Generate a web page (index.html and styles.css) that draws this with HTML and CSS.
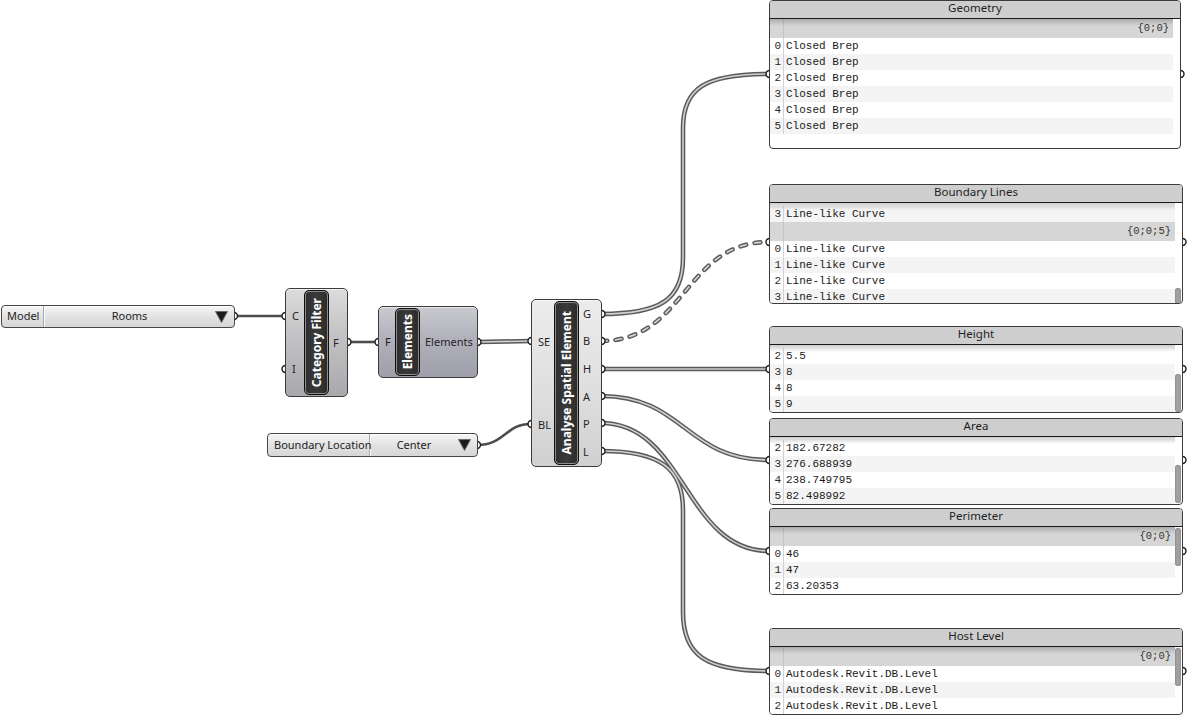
FILE: index.html
```html
<!DOCTYPE html>
<html>
<head>
<meta charset="utf-8">
<link rel="stylesheet" href="styles.css">
</head>
<body>
<div class="canvas">
  <svg class="wires" width="1189" height="715" viewBox="0 0 1189 715">
    <g class="single">
      <path d="M234 316 L285 316"/>
      <path d="M348 342 L378 342"/>
      <path d="M477 445 C505 445 505 424 531 424"/>
    </g>
    <g class="dbl-outer">
      <path d="M478 342 L531 341"/>
      <path d="M601 314 C660 314 683 300 683 258 L683 128 C683 88 705 74 769 74"/>
      <path d="M601 369 L769 369"/>
      <path d="M601 396 C685 396 685 460 769 460"/>
      <path d="M601 423 C685 423 685 551 769 551"/>
      <path d="M601 451 C660 451 683 468 683 510 L683 612 C683 655 705 671 769 671"/>
    </g>
    <g class="dbl-inner">
      <path d="M478 342 L531 341"/>
      <path d="M601 314 C660 314 683 300 683 258 L683 128 C683 88 705 74 769 74"/>
      <path d="M601 369 L769 369"/>
      <path d="M601 396 C685 396 685 460 769 460"/>
      <path d="M601 423 C685 423 685 551 769 551"/>
      <path d="M601 451 C660 451 683 468 683 510 L683 612 C683 655 705 671 769 671"/>
    </g>
    <path class="dash-outer" d="M601 341 C686 341 684 242 769 242"/>
    <path class="dash-inner" d="M601 341 C686 341 684 242 769 242"/>
    <g class="grips">
      <circle cx="234" cy="316" r="3.5"/>
      <circle cx="285.5" cy="316" r="3.5"/>
      <circle cx="285.5" cy="369" r="3.5"/>
      <circle cx="347.5" cy="342" r="3.5"/>
      <circle cx="378.5" cy="342" r="3.5"/>
      <circle cx="477.5" cy="342" r="3.5"/>
      <circle cx="477" cy="445" r="3.5"/>
      <circle cx="531.5" cy="341" r="3.5"/>
      <circle cx="531.5" cy="424" r="3.5"/>
      <circle cx="601.5" cy="314" r="3.5"/>
      <circle cx="601.5" cy="341" r="3.5"/>
      <circle cx="601.5" cy="369" r="3.5"/>
      <circle cx="601.5" cy="396" r="3.5"/>
      <circle cx="601.5" cy="423" r="3.5"/>
      <circle cx="601.5" cy="451" r="3.5"/>
      <circle cx="769.5" cy="74" r="3.5"/>
      <circle cx="1180.5" cy="74" r="3.5"/>
      <circle cx="769.5" cy="242" r="3.5"/>
      <circle cx="1182.5" cy="242" r="3.5"/>
      <circle cx="769.5" cy="369" r="3.5"/>
      <circle cx="1182.5" cy="369" r="3.5"/>
      <circle cx="769.5" cy="460" r="3.5"/>
      <circle cx="1182.5" cy="460" r="3.5"/>
      <circle cx="769.5" cy="551" r="3.5"/>
      <circle cx="1182.5" cy="551" r="3.5"/>
      <circle cx="769.5" cy="671" r="3.5"/>
      <circle cx="1182.5" cy="671" r="3.5"/>
    </g>
  </svg>

  <!-- Value list: Model -->
  <div class="vlist vl-model">
    <div class="vl-name">Model</div>
    <div class="vl-val">Rooms</div>
    <div class="vl-arrow"><svg width="13" height="12" viewBox="0 0 13 12"><polygon points="0.5,0.5 12.5,0.5 6.5,11.5"/></svg></div>
  </div>

  <!-- Value list: Boundary Location -->
  <div class="vlist vl-bound">
    <div class="vl-name">Boundary Location</div>
    <div class="vl-val">Center</div>
    <div class="vl-arrow"><svg width="13" height="12" viewBox="0 0 13 12"><polygon points="0.5,0.5 12.5,0.5 6.5,11.5"/></svg></div>
  </div>

  <!-- Category Filter -->
  <div class="comp c-cat">
    <div class="ins"><span>C</span><span>I</span></div>
    <div class="cap"><span>Category Filter</span></div>
    <div class="outs"><span>F</span></div>
  </div>

  <!-- Elements -->
  <div class="comp c-elem">
    <div class="ins"><span>F</span></div>
    <div class="cap"><span>Elements</span></div>
    <div class="outs"><span>Elements</span></div>
  </div>

  <!-- Analyse Spatial Element -->
  <div class="comp c-ana">
    <div class="ins"><span>SE</span><span>BL</span></div>
    <div class="cap"><span>Analyse Spatial Element</span></div>
    <div class="outs"><span>G</span><span>B</span><span>H</span><span>A</span><span>P</span><span>L</span></div>
  </div>

  <!-- Panels -->
  <div class="panel p-geom">
    <div class="ptitle">Geometry</div>
    <div class="pbody">
      <div class="phead"><span class="idx"></span><span class="path">{0;0}</span></div>
      <div class="row"><span class="idx">0</span><span class="val">Closed Brep</span></div>
      <div class="row alt"><span class="idx">1</span><span class="val">Closed Brep</span></div>
      <div class="row"><span class="idx">2</span><span class="val">Closed Brep</span></div>
      <div class="row alt"><span class="idx">3</span><span class="val">Closed Brep</span></div>
      <div class="row"><span class="idx">4</span><span class="val">Closed Brep</span></div>
      <div class="row alt"><span class="idx">5</span><span class="val">Closed Brep</span></div>
    </div>
  </div>

  <div class="panel p-bound">
    <div class="ptitle">Boundary Lines</div>
    <div class="pbody padded">
      <div class="row alt"><span class="idx">3</span><span class="val">Line-like Curve</span></div>
      <div class="phead"><span class="idx"></span><span class="path">{0;0;5}</span></div>
      <div class="row"><span class="idx">0</span><span class="val">Line-like Curve</span></div>
      <div class="row alt"><span class="idx">1</span><span class="val">Line-like Curve</span></div>
      <div class="row"><span class="idx">2</span><span class="val">Line-like Curve</span></div>
      <div class="row alt"><span class="idx">3</span><span class="val">Line-like Curve</span></div>
    </div>
    <div class="thumb"></div>
  </div>

  <div class="panel p-height">
    <div class="ptitle">Height</div>
    <div class="pbody padded">
      <div class="row"><span class="idx">2</span><span class="val">5.5</span></div>
      <div class="row alt"><span class="idx">3</span><span class="val">8</span></div>
      <div class="row"><span class="idx">4</span><span class="val">8</span></div>
      <div class="row alt"><span class="idx">5</span><span class="val">9</span></div>
    </div>
    <div class="thumb"></div>
  </div>

  <div class="panel p-area">
    <div class="ptitle">Area</div>
    <div class="pbody padded">
      <div class="row"><span class="idx">2</span><span class="val">182.67282</span></div>
      <div class="row alt"><span class="idx">3</span><span class="val">276.688939</span></div>
      <div class="row"><span class="idx">4</span><span class="val">238.749795</span></div>
      <div class="row alt"><span class="idx">5</span><span class="val">82.498992</span></div>
    </div>
    <div class="thumb"></div>
  </div>

  <div class="panel p-perim">
    <div class="ptitle">Perimeter</div>
    <div class="pbody">
      <div class="phead"><span class="idx"></span><span class="path">{0;0}</span></div>
      <div class="row"><span class="idx">0</span><span class="val">46</span></div>
      <div class="row alt"><span class="idx">1</span><span class="val">47</span></div>
      <div class="row"><span class="idx">2</span><span class="val">63.20353</span></div>
    </div>
    <div class="thumb"></div>
  </div>

  <div class="panel p-host">
    <div class="ptitle">Host Level</div>
    <div class="pbody">
      <div class="phead"><span class="idx"></span><span class="path">{0;0}</span></div>
      <div class="row"><span class="idx">0</span><span class="val">Autodesk.Revit.DB.Level</span></div>
      <div class="row alt"><span class="idx">1</span><span class="val">Autodesk.Revit.DB.Level</span></div>
      <div class="row"><span class="idx">2</span><span class="val">Autodesk.Revit.DB.Level</span></div>
    </div>
    <div class="thumb"></div>
  </div>
</div>
</body>
</html>
```

FILE: styles.css
```css
* { box-sizing: border-box; }
html, body { margin: 0; padding: 0; background: #fff; }
body { font-family: "Noto Sans", "Open Sans", sans-serif; font-size: 11px; color: #1e1e1e; }

.canvas { position: relative; width: 1189px; height: 715px; overflow: hidden; background: #fff; }

/* wires */
.wires { position: absolute; left: 0; top: 0; }
.wires path { fill: none; }
.single path { stroke: #4d4d4d; stroke-width: 2.6; }
.dbl-outer path { stroke: #5a5a5a; stroke-width: 4.6; }
.dbl-inner path { stroke: #cfcfcf; stroke-width: 1.6; }
.dash-outer { stroke: #5e5e5e; stroke-width: 4.6; stroke-dasharray: 6 8.5; stroke-linecap: round; fill: none; }
.dash-inner { stroke: #d4d4d4; stroke-width: 1.6; stroke-dasharray: 6 8.5; stroke-linecap: round; fill: none; }
.grips circle { fill: #fff; stroke: #1a1a1a; stroke-width: 1.4; }

/* value lists */
.vlist {
  position: absolute; display: flex; align-items: stretch;
  border: 1px solid #474747; border-radius: 4px;
  background: linear-gradient(#f6f6f6, #e4e4e4 45%, #d6d6d6);
  box-shadow: inset 0 1px 0 #fff;
}
.vl-model { left: 1px; top: 305px; width: 234px; height: 23px; }
.vl-bound { left: 267px; top: 433px; width: 211px; height: 24px; }
.vl-name {
  display: flex; align-items: center; padding: 0 5px 2px;
  border-right: 1px solid #a9a9a9; box-shadow: 1px 0 0 #fafafa;
  white-space: nowrap;
}
.vl-model .vl-name { width: 42px; }
.vl-bound .vl-name { width: 102px; padding-left: 6px; }
.vl-val { flex: 1; display: flex; align-items: center; justify-content: center; white-space: nowrap; padding-bottom: 2px; }
.vl-arrow { width: 19px; display: flex; align-items: center; justify-content: flex-start; }
.vl-arrow polygon { fill: #1c1c1c; stroke: #6a6a6a; stroke-width: 1; stroke-linejoin: round; }

/* components */
.comp {
  position: absolute; display: flex; align-items: stretch;
  border: 1px solid #3b3b3b; border-radius: 5px;
  box-shadow: inset 0 1px 0 rgba(255,255,255,0.6);
}
.c-cat { left: 285px; top: 288px; width: 63px; height: 109px; background: linear-gradient(#dcdcdc, #c4c4c6 40%, #a9a9ad); }
.c-elem { left: 378px; top: 306px; width: 100px; height: 72px; background: linear-gradient(#c9c9cf, #b1b1bb 45%, #9f9fab); }
.c-ana { left: 531px; top: 299px; width: 71px; height: 168px; background: linear-gradient(#ececec, #e0e0e0 50%, #d0d0d0); }

.ins, .outs { display: flex; flex-direction: column; justify-content: space-around; }
.ins span, .outs span { line-height: 14px; white-space: nowrap; }
.c-cat .ins { width: 18px; padding-left: 6px; }
.c-cat .outs { padding-left: 4px; }
.c-elem .ins { width: 16px; padding-left: 6px; }
.c-elem .outs { padding-left: 5px; padding-bottom: 1px; }
.c-ana .ins { width: 22px; padding-left: 6px; }
.c-ana .outs { padding-left: 4px; }
.outs span { color: #2a1f2a; }

.cap {
  width: 25px; margin: 1px 0;
  background: linear-gradient(90deg, #2e2e2e, #3a3a3a 50%, #2a2a2a);
  border: 1px solid #0e0e0e; border-radius: 5px;
  box-shadow: inset 0 0 0 1px #8c8c8c;
  display: flex; align-items: center; justify-content: center;
}
.cap span {
  writing-mode: vertical-rl; transform: rotate(180deg);
  color: #fff; font-weight: 700; font-size: 12px; white-space: nowrap; line-height: 14px;
}

/* panels */
.panel {
  position: absolute; border: 1px solid #3c3c3c; border-radius: 4px;
  background: #fff; overflow: hidden;
  display: flex; flex-direction: column;
}
.p-geom { left: 769px; top: 0; width: 412px; height: 149px; }
.p-bound { left: 769px; top: 184px; width: 414px; height: 120px; }
.p-height { left: 769px; top: 326px; width: 414px; height: 87px; }
.p-area { left: 769px; top: 418px; width: 414px; height: 87px; }
.p-perim { left: 769px; top: 508px; width: 414px; height: 87px; }
.p-host { left: 769px; top: 628px; width: 414px; height: 87px; }

.ptitle {
  height: 18px; flex: none; background: #cecece;
  border-bottom: 1px solid #1a1a1a;
  text-align: center; line-height: 14px; font-size: 11.5px; color: #1e1e1e;
}
.pbody {
  position: relative; flex: 1; overflow: hidden; margin-right: 7px;
  display: flex; flex-direction: column;
  font-family: "Liberation Mono", "DejaVu Sans Mono", monospace; font-size: 11px; color: #1a1a1a;
}
.pbody.padded { padding-top: 3px; }
.pbody::before {
  content: ""; position: absolute; left: 0; right: 0; top: 0; height: 7px;
  background: linear-gradient(rgba(0,0,0,0.2), rgba(0,0,0,0));
  z-index: 2;
}
.row { display: flex; height: 16px; flex: none; line-height: 16px; background: #fff; }
.row.alt { background: #f4f4f4; }
.phead { display: flex; height: 19px; flex: none; background: #d6d6d6; line-height: 19px; }
.idx { width: 14px; flex: none; text-align: right; padding-right: 2px; border-right: 1px solid #d2d2d2; color: #2a2a2a; }
.phead .idx { border-right-color: #c4c4c4; }
.val { padding-left: 2px; white-space: nowrap; }
.path { flex: 1; text-align: right; padding-right: 4px; font-size: 10.5px; color: #333; }

.thumb { position: absolute; right: 1px; width: 6px; border-radius: 3px; background: #a0a0a0; box-shadow: inset 0 0 0 1px #939393; }
.p-bound .thumb { top: 103px; height: 16px; }
.p-height .thumb { top: 47px; height: 38px; }
.p-area .thumb { top: 46px; height: 38px; }
.p-perim .thumb { top: 19px; height: 38px; }
.p-host .thumb { top: 19px; height: 38px; }
```
